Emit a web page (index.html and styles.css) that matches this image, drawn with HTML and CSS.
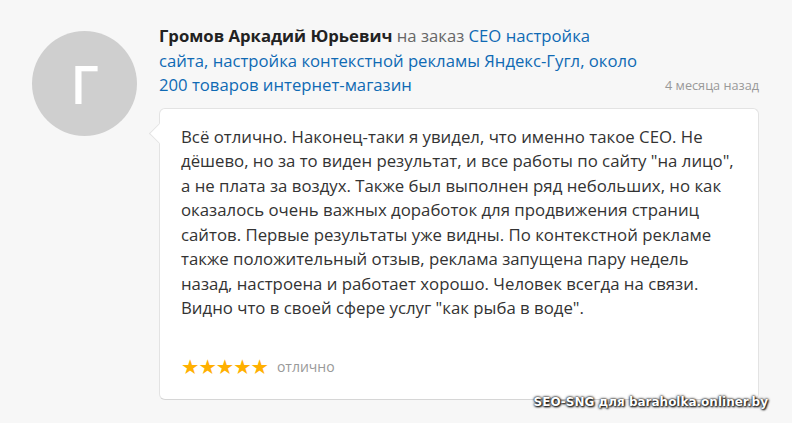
FILE: index.html
```html
<!DOCTYPE html>
<html lang="ru">
<head>
<meta charset="utf-8">
<link rel="stylesheet" href="styles.css">
</head>
<body>
<div class="review">
  <div class="avatar-col">
    <div class="avatar">Г</div>
  </div>
  <div class="main">
    <div class="head">
      <div class="title"><span class="name">Громов Аркадий Юрьевич</span> <span class="muted">на заказ</span> <a class="link" href="#">СЕО настройка сайта, настройка контекстной рекламы Яндекс-Гугл, около 200 товаров интернет-магазин</a></div>
      <div class="date">4 месяца назад</div>
    </div>
    <div class="card">
      <p class="text">Всё отлично. Наконец-таки я увидел, что именно такое СЕО. Не дёшево, но за то виден результат, и все работы по сайту "на лицо", а не плата за воздух. Также был выполнен ряд небольших, но как оказалось очень важных доработок для продвижения страниц сайтов. Первые результаты уже видны. По контекстной рекламе также положительный отзыв, реклама запущена пару недель назад, настроена и работает хорошо. Человек всегда на связи. Видно что в своей сфере услуг "как рыба в воде".</p>
      <div class="rating">
        <span class="stars">★★★★★</span>
        <span class="rating-label">отлично</span>
      </div>
    </div>
  </div>
</div>
<div class="watermark">SEO-SNG для baraholka.onliner.by</div>
</body>
</html>
```
FILE: styles.css
```css
html, body {
  margin: 0;
  padding: 0;
}
body {
  background: #f7f7f7;
  font-family: "Open Sans", "Noto Sans", sans-serif;
  width: 792px;
  height: 423px;
  overflow: hidden;
  position: relative;
}
.review {
  display: flex;
  padding-top: 24px;
}
.avatar-col {
  width: 159px;
  flex: none;
  padding-left: 32px;
  padding-top: 7px;
  box-sizing: border-box;
}
.avatar {
  width: 105px;
  height: 105px;
  border-radius: 50%;
  background: #cfcfcf;
  color: #fff;
  font-size: 52px;
  line-height: 105px;
  text-align: center;
  font-weight: 600;
}
.main {
  width: 600px;
  flex: none;
}
.head {
  display: flex;
  align-items: flex-end;
  justify-content: space-between;
}
.title {
  width: 482px;
  font-size: 16.7px;
  line-height: 24.5px;
  color: #666;
}
.name {
  font-weight: 700;
  color: #222;
}
.link {
  color: #0f6ab4;
  text-decoration: none;
}
.date {
  font-size: 12.7px;
  color: #999;
  padding-bottom: 4px;
}
.card {
  position: relative;
  margin-top: 10px;
  background: #fff;
  border: 1px solid #e3e3e3;
  border-bottom-color: #d6d6d6;
  border-radius: 6px;
  padding: 16px 18px 22px 21px;
}
.card::before {
  content: "";
  position: absolute;
  left: -8px;
  top: 17px;
  width: 14px;
  height: 14px;
  background: #fff;
  border-left: 1px solid #e3e3e3;
  border-bottom: 1px solid #e3e3e3;
  transform: rotate(45deg);
}
.text {
  margin: 0;
  font-size: 16.8px;
  line-height: 24.5px;
  color: #333;
}
.rating {
  margin-top: 36px;
  display: flex;
  align-items: center;
  gap: 9px;
}
.stars {
  color: #ffb000;
  font-size: 20.5px;
  letter-spacing: -1px;
  line-height: 20px;
  font-family: "DejaVu Sans", sans-serif;
}
.rating-label {
  font-size: 14px;
  color: #999;
}
.watermark {
  position: absolute;
  right: 24px;
  bottom: 14px;
  font-family: "DejaVu Sans", sans-serif;
  font-weight: 700;
  font-size: 12px;
  color: #fff;
  text-shadow: 0 0 2px #000, 0 0 3px #333, 1px 1px 2px #000;
}
```
